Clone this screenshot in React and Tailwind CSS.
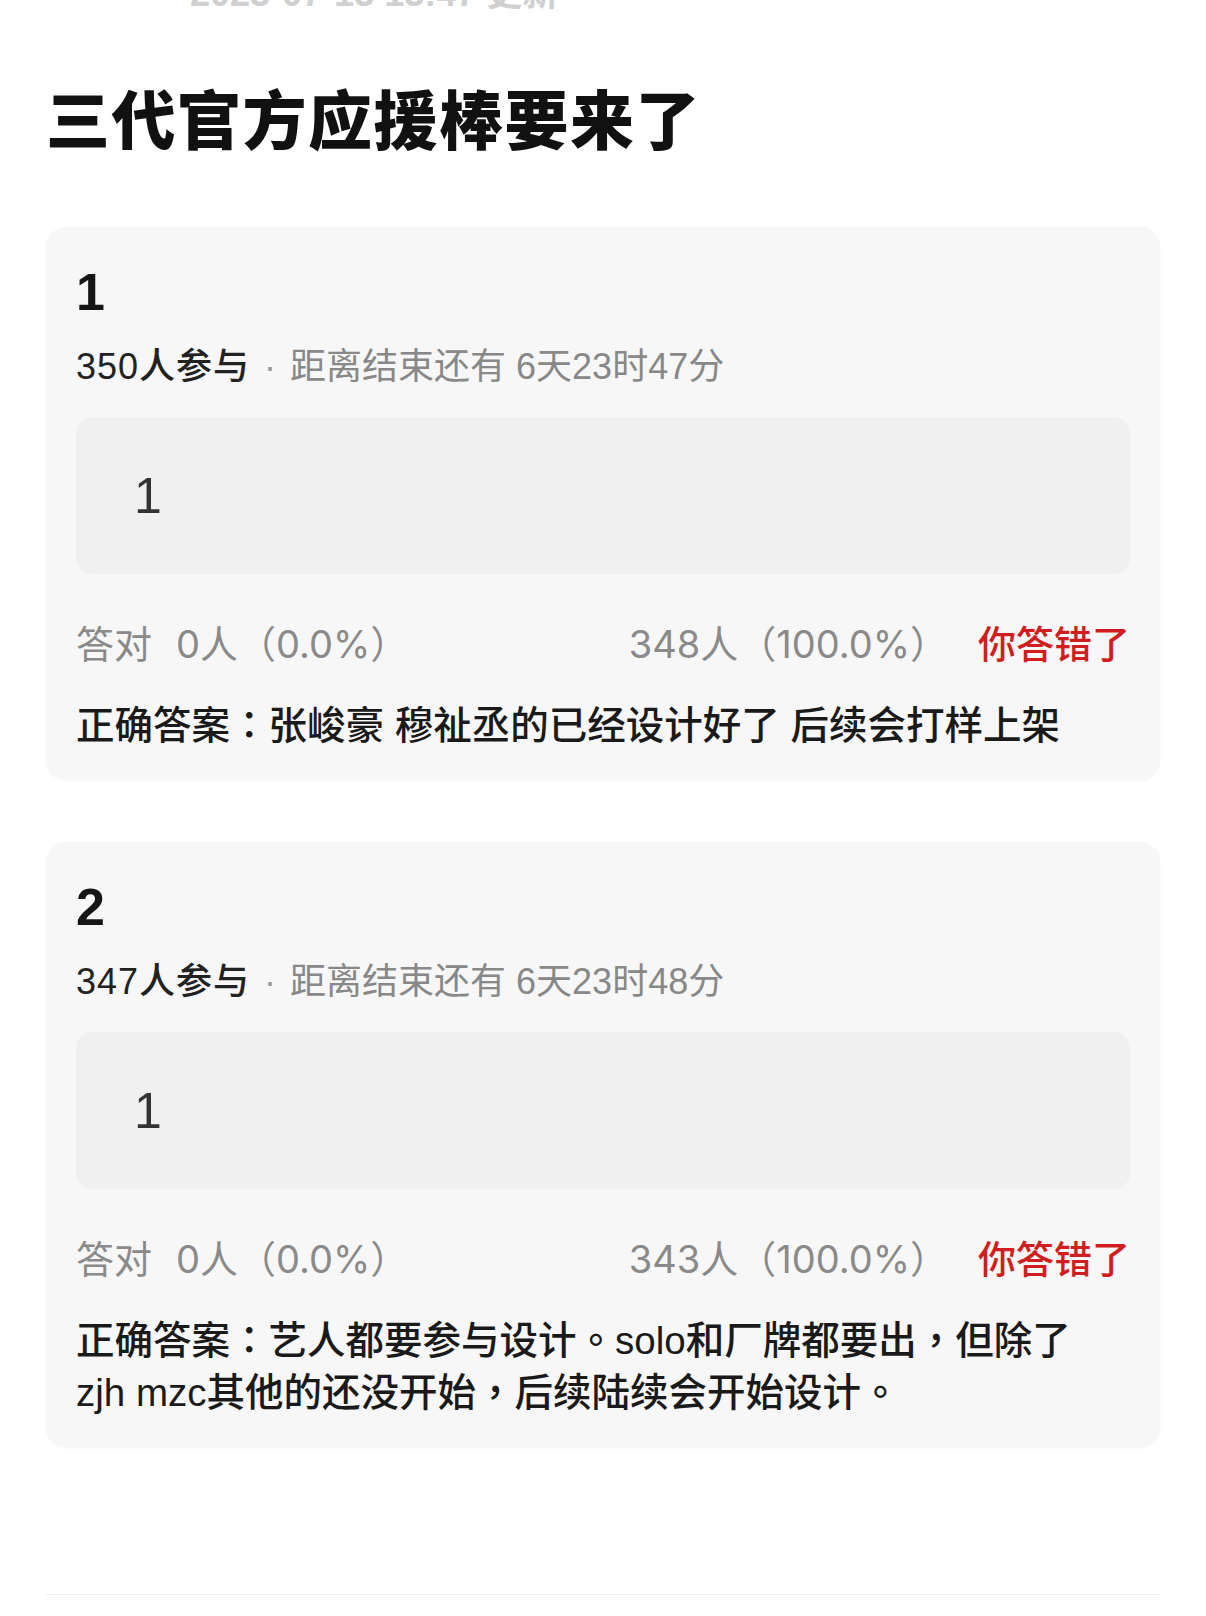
const sans = "font-['Liberation_Sans','Noto_Sans_CJK_SC',sans-serif]";

const polls = [
  {
    no: '1',
    joined: '350人参与',
    remain: '距离结束还有 6天23时47分',
    option: '1',
    right: '0人（0.0%）',
    wrong: '348人（100.0%）',
    answer: ['正确答案：张峻豪 穆祉丞的已经设计好了 后续会打样上架'],
  },
  {
    no: '2',
    joined: '347人参与',
    remain: '距离结束还有 6天23时48分',
    option: '1',
    right: '0人（0.0%）',
    wrong: '343人（100.0%）',
    answer: ['正确答案：艺人都要参与设计。solo和厂牌都要出，但除了', 'zjh mzc其他的还没开始，后续陆续会开始设计。'],
  },
];

// centred full-width punctuation, as the reference shows it
function Punct({ text }) {
  return text.split(/([：，。])/).map((part, i) =>
    /^[：，。]$/.test(part)
      ? <span key={i} className="font-['Liberation_Sans','Noto_Sans_CJK_TC',sans-serif]">{part}</span>
      : part
  );
}

function PollCard({ poll }) {
  return (
    <div className="rounded-[20px] bg-[#f7f7f7] px-[30px] pt-[39px] pb-[28px] shadow-[0_1px_3px_rgba(0,0,0,0.04)]">
      <div className="text-[52px] leading-[52px] font-bold text-[#161616]">{poll.no}</div>
      <div className="mt-[29px] text-[36px] leading-[40px] whitespace-nowrap">
        <span className="text-[#222] font-medium tracking-[1px]">{poll.joined}</span>
        <span className="text-[#999] mx-[14px]">·</span>
        <span className="text-[#888]">{poll.remain}</span>
      </div>
      <div className="mt-[30px] h-[157px] rounded-[16px] bg-[#f0f0f0] flex items-center pl-[58px]">
        <span className="text-[50px] leading-[52px] text-[#333] font-light">{poll.option}</span>
      </div>
      <div className="mt-[46px] flex items-center justify-between text-[38px] leading-[48px] whitespace-nowrap font-['Inter','Noto_Sans_CJK_SC',sans-serif]">
        <div className="text-[#8a8a8a]">
          答对<span className="ml-[24px]">{poll.right}</span>
        </div>
        <div className="flex items-center gap-[30px]">
          <span className="text-[#8a8a8a]">{poll.wrong}</span>
          <span className="text-[#d21d20] font-medium">你答错了</span>
        </div>
      </div>
      <div className="mt-[32px] text-[38.5px] leading-[52px] text-[#1a1a1a] font-medium">
        {poll.answer.map((line, i) => (
          <div key={i} className="h-[52px] whitespace-nowrap"><Punct text={line} /></div>
        ))}
      </div>
    </div>
  );
}

export default function App() {
  return (
    <div className={`w-[1206px] h-[1616px] overflow-hidden bg-white px-[46px] ${sans}`}>
      {/* date line, mostly scrolled off the top */}
      <div className="-mt-[24px] ml-[144px] text-[36px] leading-[36px] text-[#d0d0d0] font-bold whitespace-nowrap">
        2023-07-13 13:47 更新
      </div>
      <h1 className="mt-[78px] text-[64px] leading-[64px] font-black text-[#111] tracking-[1.5px] whitespace-nowrap">
        三代官方应援棒要来了
      </h1>
      <div className="mt-[73px] flex flex-col gap-[62px]">
        {polls.map(p => (
          <PollCard key={p.no} poll={p} />
        ))}
      </div>
      <div className="mt-[147px] h-px bg-[#ececec]" />
    </div>
  );
}
